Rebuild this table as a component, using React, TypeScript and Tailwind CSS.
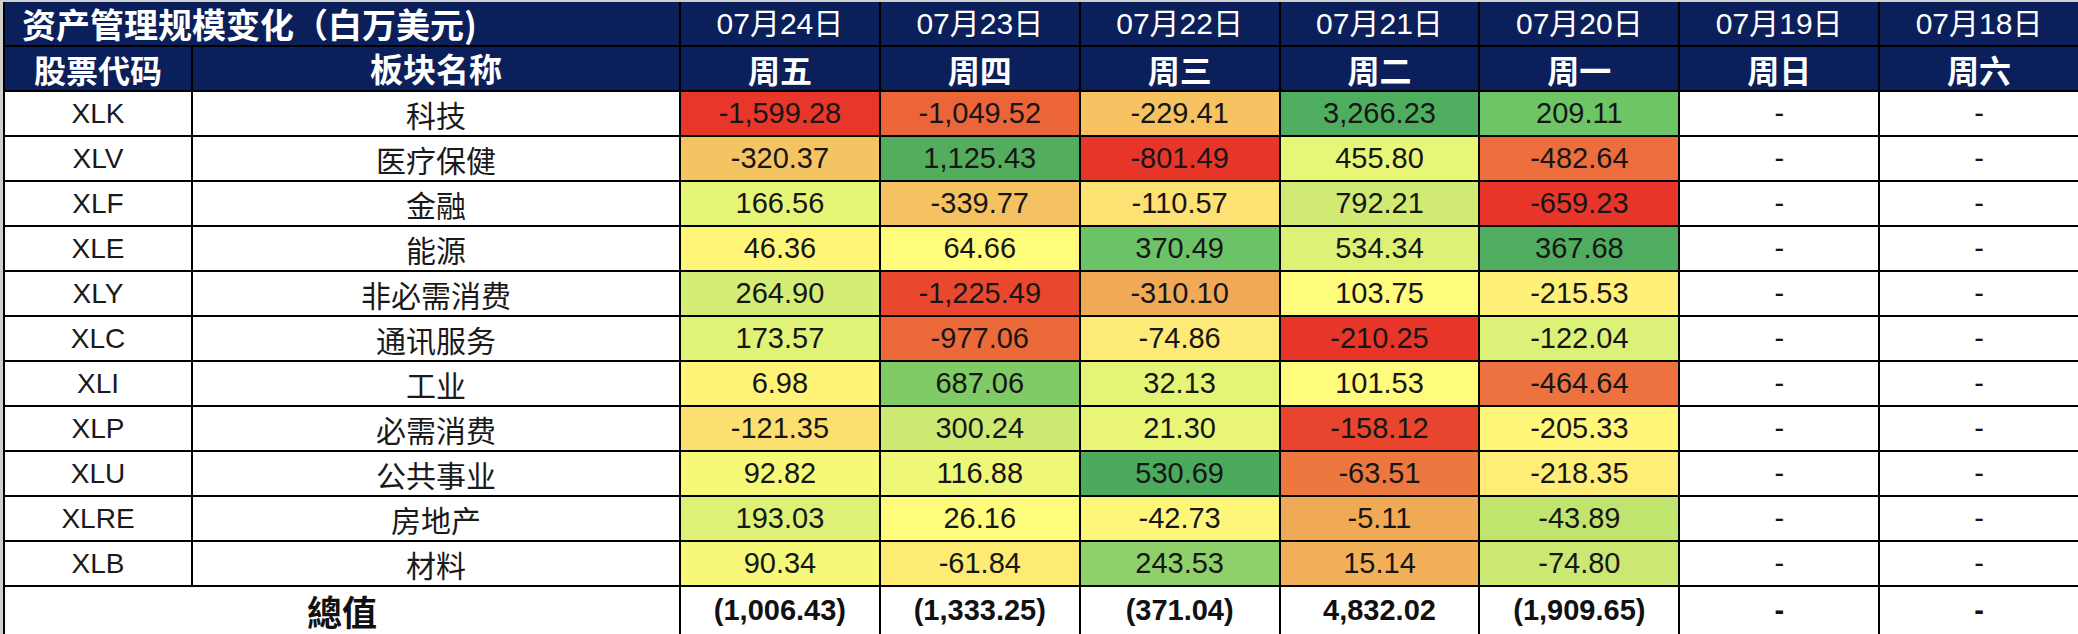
import React from "react";

const tickers = ["XLK", "XLV", "XLF", "XLE", "XLY", "XLC", "XLI", "XLP", "XLU", "XLRE", "XLB"];
const names = ["科技", "医疗保健", "金融", "能源", "非必需消费", "通讯服务", "工业", "必需消费", "公共事业", "房地产", "材料"];

type Col = { date: string; wd: string; vals?: string[]; colors?: string[]; total: string };

const cols: Col[] = [
  {
    date: "07月24日",
    wd: "周五",
    vals: ["-1,599.28", "-320.37", "166.56", "46.36", "264.90", "173.57", "6.98", "-121.35", "92.82", "193.03", "90.34"],
    colors: ["#E8372A", "#F5C462", "#E5F576", "#FFF679", "#D4ED74", "#E0F376", "#FFF478", "#FBDF6F", "#F6F878", "#DDF176", "#F5F878"],
    total: "(1,006.43)",
  },
  {
    date: "07月23日",
    wd: "周四",
    vals: ["-1,049.52", "1,125.43", "-339.77", "64.66", "-1,225.49", "-977.06", "687.06", "300.24", "116.88", "26.16", "-61.84"],
    colors: ["#EB6539", "#52AE5C", "#F5C262", "#FFFB7B", "#E9482F", "#EC6A3A", "#80CB65", "#CCEA72", "#EFF778", "#FFFB7C", "#FDEB74"],
    total: "(1,333.25)",
  },
  {
    date: "07月22日",
    wd: "周三",
    vals: ["-229.41", "-801.49", "-110.57", "370.49", "-310.10", "-74.86", "32.13", "21.30", "530.69", "-42.73", "243.53"],
    colors: ["#F6C262", "#E8352A", "#FDE173", "#6CC367", "#F0A957", "#FEEA76", "#E4F477", "#E8F577", "#4CAA5D", "#FEF67A", "#8FD06A"],
    total: "(371.04)",
  },
  {
    date: "07月21日",
    wd: "周二",
    vals: ["3,266.23", "455.80", "792.21", "534.34", "103.75", "-210.25", "101.53", "-158.12", "-63.51", "-5.11", "15.14"],
    colors: ["#4FAD5F", "#E8F677", "#D0EA73", "#DEF177", "#FFFB7C", "#E8352A", "#FFFB7C", "#E9442D", "#EC7840", "#F0AA56", "#F2B05A"],
    total: "4,832.02",
  },
  {
    date: "07月20日",
    wd: "周一",
    vals: ["209.11", "-482.64", "-659.23", "367.68", "-215.53", "-122.04", "-464.64", "-205.33", "-218.35", "-43.89", "-74.80"],
    colors: ["#6DC566", "#ED6D3C", "#E8352A", "#50AC5E", "#FFF07A", "#DCF177", "#ED7240", "#FFF67A", "#FFED78", "#C1E46F", "#CBE872"],
    total: "(1,909.65)",
  },
  { date: "07月19日", wd: "周日", total: "-" },
  { date: "07月18日", wd: "周六", total: "-" },
];

const cjk = "font-['Noto_Sans_CJK_SC','Noto_Sans',sans-serif]";
const num = "font-['Liberation_Sans','Noto_Sans_CJK_SC',sans-serif]";

export default function App() {
  return (
    <div className="w-[2078px] h-[634px] bg-[#cfcfcf] pt-[2px] pl-[3px]">
      <div className="grid h-[632px] grid-cols-[186px_486px_repeat(7,minmax(0,1fr))] grid-rows-[repeat(13,43px)_minmax(0,1fr)] gap-[2px] bg-black pl-[2px]">
        {/* title row */}
        <div className={`col-span-2 flex items-center bg-[#0b1f5b] pl-[17px] text-[34px] font-bold leading-none text-white ${cjk}`}>
          资产管理规模变化（白万美元)
        </div>
        {cols.map((c) => (
          <div key={c.date} className={`flex items-center justify-center bg-[#0b1f5b] text-[30px] leading-none text-white ${num}`}>
            {c.date}
          </div>
        ))}
        {/* header row */}
        <div className={`flex items-center justify-center bg-[#0b1f5b] text-[32px] font-bold leading-none text-white ${cjk}`}>股票代码</div>
        <div className={`flex items-center justify-center bg-[#0b1f5b] text-[33px] font-bold leading-none text-white ${cjk}`}>板块名称</div>
        {cols.map((c) => (
          <div key={c.wd} className={`flex items-center justify-center bg-[#0b1f5b] text-[32px] font-bold leading-none text-white ${cjk}`}>
            {c.wd}
          </div>
        ))}
        {/* data rows */}
        {tickers.map((t, i) => (
          <React.Fragment key={t}>
            <div className={`flex items-center justify-center bg-white text-[28px] leading-none text-[#1a1a1a] ${num}`}>{t}</div>
            <div className={`flex items-center justify-center bg-white text-[30px] leading-none text-[#1a1a1a] ${cjk}`}>{names[i]}</div>
            {cols.map((c) =>
              c.vals ? (
                <div
                  key={c.date}
                  className={`flex items-center justify-center text-[29px] leading-none text-[#161616] ${num}`}
                  style={{ backgroundColor: c.colors![i] }}
                >
                  {c.vals[i]}
                </div>
              ) : (
                <div key={c.date} className={`flex items-center justify-center bg-white text-[29px] leading-none text-[#161616] ${num}`}>
                  -
                </div>
              )
            )}
          </React.Fragment>
        ))}
        {/* total row */}
        <div className={`col-span-2 flex items-center justify-center bg-white text-[35px] font-bold leading-none text-[#111] ${cjk}`}>總值</div>
        {cols.map((c) => (
          <div key={c.date} className={`flex items-center justify-center bg-white text-[29px] font-bold leading-none text-[#111] ${num}`}>
            {c.total}
          </div>
        ))}
      </div>
    </div>
  );
}
